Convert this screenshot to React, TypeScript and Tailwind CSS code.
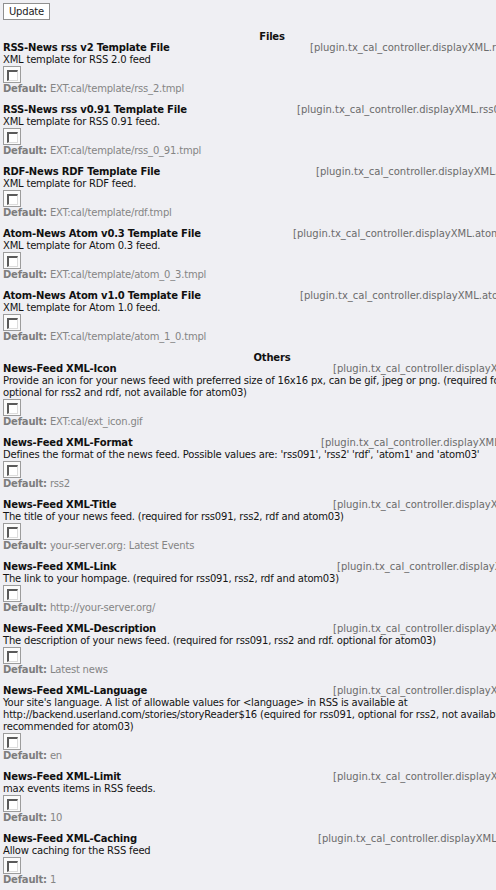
type Item = {
  title: string;
  constant: string;
  indent: string;
  lines: string[];
  def: string;
};

const files: Item[] = [
  {
    title: "RSS-News rss v2 Template File",
    constant: "[plugin.tx_cal_controller.displayXML.rss2_tmplFile]",
    indent: "w-[307px]",
    lines: ["XML template for RSS 2.0 feed"],
    def: "EXT:cal/template/rss_2.tmpl",
  },
  {
    title: "RSS-News rss v0.91 Template File",
    constant: "[plugin.tx_cal_controller.displayXML.rss091_tmplFile]",
    indent: "w-[294px]",
    lines: ["XML template for RSS 0.91 feed."],
    def: "EXT:cal/template/rss_0_91.tmpl",
  },
  {
    title: "RDF-News RDF Template File",
    constant: "[plugin.tx_cal_controller.displayXML.rdf_tmplFile]",
    indent: "w-[313px]",
    lines: ["XML template for RDF feed."],
    def: "EXT:cal/template/rdf.tmpl",
  },
  {
    title: "Atom-News Atom v0.3 Template File",
    constant: "[plugin.tx_cal_controller.displayXML.atom03_tmplFile]",
    indent: "w-[290px]",
    lines: ["XML template for Atom 0.3 feed."],
    def: "EXT:cal/template/atom_0_3.tmpl",
  },
  {
    title: "Atom-News Atom v1.0 Template File",
    constant: "[plugin.tx_cal_controller.displayXML.atom1_tmplFile]",
    indent: "w-[297px]",
    lines: ["XML template for Atom 1.0 feed."],
    def: "EXT:cal/template/atom_1_0.tmpl",
  },
];

const others: Item[] = [
  {
    title: "News-Feed XML-Icon",
    constant: "[plugin.tx_cal_controller.displayXML.xmlIcon]",
    indent: "w-[330px]",
    lines: [
      "Provide an icon for your news feed with preferred size of 16x16 px, can be gif, jpeg or png. (required for rss091,",
      "optional for rss2 and rdf, not available for atom03)",
    ],
    def: "EXT:cal/ext_icon.gif",
  },
  {
    title: "News-Feed XML-Format",
    constant: "[plugin.tx_cal_controller.displayXML.xmlFormat]",
    indent: "w-[318px]",
    lines: ["Defines the format of the news feed. Possible values are: 'rss091', 'rss2' 'rdf', 'atom1' and 'atom03'"],
    def: "rss2",
  },
  {
    title: "News-Feed XML-Title",
    constant: "[plugin.tx_cal_controller.displayXML.xmlTitle]",
    indent: "w-[330px]",
    lines: ["The title of your news feed. (required for rss091, rss2, rdf and atom03)"],
    def: "your-server.org: Latest Events",
  },
  {
    title: "News-Feed XML-Link",
    constant: "[plugin.tx_cal_controller.displayXML.xmlLink]",
    indent: "w-[334px]",
    lines: ["The link to your hompage. (required for rss091, rss2, rdf and atom03)"],
    def: "http://your-server.org/",
  },
  {
    title: "News-Feed XML-Description",
    constant: "[plugin.tx_cal_controller.displayXML.xmlDesc]",
    indent: "w-[330px]",
    lines: ["The description of your news feed. (required for rss091, rss2 and rdf. optional for atom03)"],
    def: "Latest news",
  },
  {
    title: "News-Feed XML-Language",
    constant: "[plugin.tx_cal_controller.displayXML.xmlLang]",
    indent: "w-[330px]",
    lines: [
      "Your site's language. A list of allowable values for <language> in RSS is available at",
      "http://backend.userland.com/stories/storyReader$16 (equired for rss091, optional for rss2, not available for rdf,",
      "recommended for atom03)",
    ],
    def: "en",
  },
  {
    title: "News-Feed XML-Limit",
    constant: "[plugin.tx_cal_controller.displayXML.xmlLimit]",
    indent: "w-[330px]",
    lines: ["max events items in RSS feeds."],
    def: "10",
  },
  {
    title: "News-Feed XML-Caching",
    constant: "[plugin.tx_cal_controller.displayXML.xmlCaching]",
    indent: "w-[315px]",
    lines: ["Allow caching for the RSS feed"],
    def: "1",
  },
];

const Checkbox = () => (
  <div className="w-[18px] h-[17px] border border-[#9c9c9c] bg-[#fbfbfb] pl-[3px] pt-[3px]">
    <div className="w-[11px] h-[11px] bg-white border-t-2 border-l-2 border-t-[#5a5a5a] border-l-[#5a5a5a] border-r border-b border-r-[#dcdcdc] border-b-[#dcdcdc]" />
  </div>
);

const Row = ({ item }: { item: Item }) => (
  <div className="mb-[9px]">
    {/* titel + constant */}
    <div className="flex h-[12px] items-center whitespace-nowrap">
      <b className={`${item.indent} shrink-0 font-bold text-[#111]`}>{item.title}</b>
      <span className="tracking-normal text-[#6b6b6b]">{item.constant}</span>
    </div>
    {item.lines.map((l) => (
      <div key={l} className="h-[12px] leading-[12px] whitespace-nowrap text-[#141414]">
        {l}
      </div>
    ))}
    <Checkbox />
    <div className="h-[12px] leading-[12px] whitespace-nowrap text-[#858585]">
      <b className="font-bold text-[#7d7d7d]">Default:</b> {item.def}
    </div>
  </div>
);

export default function App() {
  return (
    <div className="w-[496px] h-[890px] overflow-hidden bg-[#efeff3] font-['DejaVu_Sans',sans-serif] text-[10px] leading-[12px] tracking-[-0.2px]">
      <div className="w-[544px] px-[3px] pt-[3px]">
        <button className="h-[17px] px-[5px] bg-white border border-[#8f8f8f] text-[#222] text-[10px] leading-[15px]">
          Update
        </button>

        <div className="mt-[11px] h-[11px] leading-[11px] text-center font-bold text-[#111]">Files</div>
        {files.map((it) => (
          <Row key={it.title} item={it} />
        ))}

        <div className="mt-[2px] h-[11px] leading-[11px] text-center font-bold text-[#111]">Others</div>
        {others.map((it) => (
          <Row key={it.title} item={it} />
        ))}
      </div>
    </div>
  );
}
